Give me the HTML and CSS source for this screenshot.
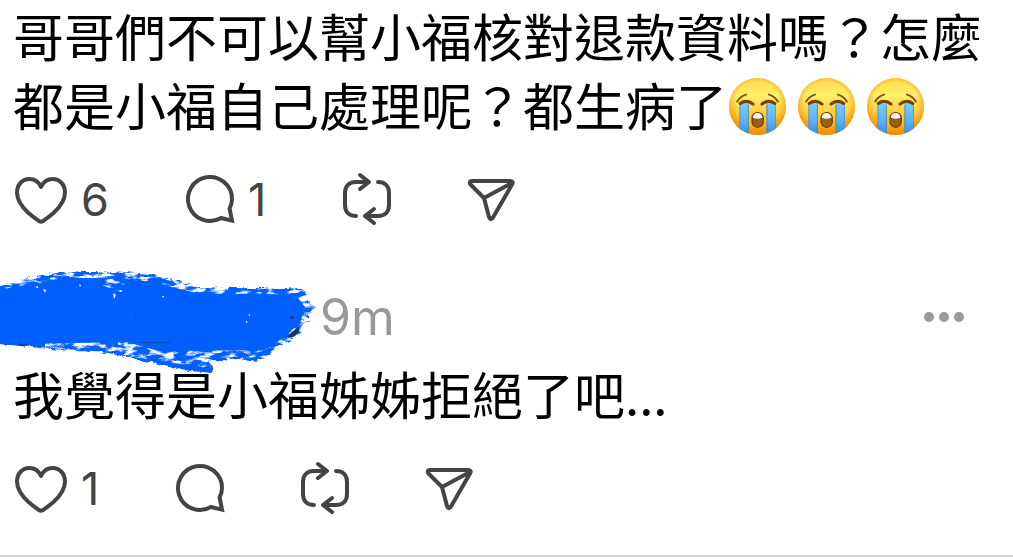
FILE: index.html
```html
<!DOCTYPE html>
<html lang="zh-Hant">
<head>
  <meta charset="UTF-8">
  <meta name="viewport" content="width=device-width, initial-scale=1">
  <title>Thread</title>
  <link rel="stylesheet" href="styles.css">
</head>
<body>
  <!-- shared icons -->
  <svg class="sprite" aria-hidden="true">
    <defs>
      <linearGradient id="face" x1="0" y1="0" x2="0" y2="1">
        <stop offset="0" stop-color="#ffd84a"/>
        <stop offset="0.3" stop-color="#fff06a"/>
        <stop offset="0.65" stop-color="#ffcb35"/>
        <stop offset="1" stop-color="#f99a12"/>
      </linearGradient>
      <radialGradient id="rim" cx="0.5" cy="0.45" r="0.55">
        <stop offset="0.7" stop-color="#f58a00" stop-opacity="0"/>
        <stop offset="1" stop-color="#f08000" stop-opacity="0.75"/>
      </radialGradient>
      <linearGradient id="tear" x1="0" y1="0" x2="0" y2="1">
        <stop offset="0" stop-color="#7cc8fb"/>
        <stop offset="0.55" stop-color="#5ab2f5"/>
        <stop offset="1" stop-color="#2b85e4"/>
      </linearGradient>
      <clipPath id="round"><circle cx="111" cy="108" r="84"/></clipPath>
    </defs>
    <symbol id="heart" viewBox="0 0 52 52">
      <path d="M26 13C23.5 7.500 19.500 5 14.500 5 7.500 5 2 10.500 2 18.500c0 9 5.500 15 11.500 20.500 4 3.500 7 5.500 10.500 8q2 1.300 4 0c3.500-2.500 6.500-4.500 10.500-8C44.500 33.500 50 27.500 50 18.500 50 10.500 44.500 5 37.500 5 32.500 5 28.500 7.500 26 13z"/>
    </symbol>
    <symbol id="bubble" viewBox="0 0 48 52">
      <path d="M35 44A22 22 0 1 1 46 25Q46 30 43.600 34.500L46 46.600z"/>
    </symbol>
    <symbol id="repost" viewBox="0 0 48 52">
      <path d="M13 42C6 42 2 38 2 31V19C2 12 6 8 13 8H26M17 1l9 7-9 7M35 8c7 0 11 4 11 11v12c0 7-4 11-11 11H22M31 35l-9 7 9 7"/>
    </symbol>
    <symbol id="send" viewBox="0 0 48 52">
      <path d="M4 7H42Q46 7 44 10.500L25 43.500Q22.500 47 21 43L16 24 2.500 10.500Q.500 7 4 7zM16 24L44 9"/>
    </symbol>
    <symbol id="crying" viewBox="27 24 168 168">
      <circle cx="111" cy="108" r="84" fill="url(#face)"/>
      <circle cx="111" cy="108" r="84" fill="url(#rim)"/>
      <g clip-path="url(#round)">
        <path d="M58 99H86V196H58zM137 99H165V196H137z" fill="url(#tear)"/>
        <path d="M59 99V196M164 99V196" stroke="#3b8bd8" stroke-width="2"/>
        <path d="M84 103V196M139 103V196" stroke="#6c8c76" stroke-width="3"/>
      </g>
      <path d="M51 93Q60 78 77 73M171 93Q162 78 145 73" fill="none" stroke="#875008" stroke-width="6" stroke-linecap="round"/>
      <path d="M60 99Q79 86 98 101M124 101Q143 86 162 99" fill="none" stroke="#764006" stroke-width="9" stroke-linecap="round"/>
      <rect x="93" y="124" width="37" height="47" rx="18" fill="#6e3e04"/>
      <path d="M97 146Q111 139 126 146V153Q124 168 111 168T97 153z" fill="#97630c"/>
      <path d="M97 142Q98 127 111 127T126 142Q111 146 97 142z" fill="#f6f5f4"/>
    </symbol>
  </svg>

  <main class="thread">
    <article class="post">
      <p class="text">哥哥們不可以幫小福核對退款資料嗎？怎麼都是小福自己處理呢？都生病了<svg class="emoji" role="img" aria-label="😭"><use href="#crying"/></svg><svg class="emoji" role="img" aria-label="😭"><use href="#crying"/></svg><svg class="emoji" role="img" aria-label="😭"><use href="#crying"/></svg></p>
      <div class="actions">
        <button type="button" aria-label="Like"><svg class="icon icon-heart"><use href="#heart"/></svg><span>6</span></button>
        <button type="button" aria-label="Reply"><svg class="icon icon-bubble"><use href="#bubble"/></svg><span>1</span></button>
        <button type="button" aria-label="Repost"><svg class="icon"><use href="#repost"/></svg></button>
        <button type="button" aria-label="Share"><svg class="icon"><use href="#send"/></svg></button>
      </div>
    </article>

    <article class="post reply">
      <header class="post-header">
        <div class="author">
          <svg class="scribble" viewBox="0 0 320 110" aria-hidden="true">
            <defs>
              <filter id="rough" x="-5%" y="-10%" width="110%" height="120%">
                <feTurbulence type="fractalNoise" baseFrequency="0.12 0.25" numOctaves="3" seed="4" result="n"/>
                <feDisplacementMap in="SourceGraphic" in2="n" scale="6" xChannelSelector="R" yChannelSelector="G"/>
              </filter>
              <filter id="dry" x="-5%" y="-10%" width="110%" height="120%">
                <feTurbulence type="fractalNoise" baseFrequency="0.08 0.22" numOctaves="4" seed="9" result="n"/>
                <feColorMatrix in="n" type="matrix" values="0 0 0 0 1  0 0 0 0 1  0 0 0 0 1  5 0 0 0 -2.300" result="specks"/>
                <feComposite in="specks" in2="SourceGraphic" operator="in"/>
              </filter>
            </defs>
            <path filter="url(#rough)" fill="#0061fe" d="M-10 19L8 15 22 9 42 6 60 2 112 2 150 5 177 11 198 17 235 18 298 18 306 23 308 31 315 37 309 43 309 51 301 56 300 64 290 71 277 76 270 85 256 91 240 88 210 91 213 103 190 101 160 94 130 88 108 83 60 80 20 76-10 73z"/>
            <g filter="url(#dry)" fill="none" stroke="#fff">
              <path stroke-width="7" d="M5 15L40 9 65 4 110 5 150 8 178 15 200 20 298 21"/>
              <path stroke-width="9" d="M104 11L123 18"/>
              <path stroke-width="9" d="M45 78L100 77 150 85 212 94"/>
              <path stroke-width="7" d="M118 73L160 85 205 84 265 84"/>
              <path stroke-width="9" d="M298 20L310 37 304 55 287 71 262 86"/>
            </g>
            <g fill="#fff">
              <path d="M35 17l3-1 0 2zM43 19l3 1-1 3zM79 14l2 1-1 2zM113 23l3 2-2 4zM162 26l2 0-1 2zM248 45l2-1 0 2zM246 51l2 1-2 1z"/>
            </g>
            <path fill="#173768" d="M19 73q5 3 8 0v2q-5 2-8 0zM290 46l3 0 1 2-3 1z"/>
            <path fill="#173768" opacity="0.5" d="M139 72h31v1h-31zM135 45h1v4h-1z"/>
            <path fill="#193867" d="M298 57q3 3-1 7-4 4-10 3l5-5z"/>
          </svg>
        </div>
        <time class="age">9m</time>
        <button type="button" class="more" aria-label="More">
          <svg viewBox="0 0 40 10"><circle cx="5" cy="5" r="5"/><circle cx="20" cy="5" r="5"/><circle cx="35" cy="5" r="5"/></svg>
        </button>
      </header>
      <p class="text">我覺得是小福姊姊拒絕了吧...</p>
      <div class="actions">
        <button type="button" aria-label="Like"><svg class="icon icon-heart"><use href="#heart"/></svg><span>1</span></button>
        <button type="button" aria-label="Reply"><svg class="icon icon-bubble"><use href="#bubble"/></svg></button>
        <button type="button" aria-label="Repost"><svg class="icon"><use href="#repost"/></svg></button>
        <button type="button" aria-label="Share"><svg class="icon"><use href="#send"/></svg></button>
      </div>
    </article>
  </main>
</body>
</html>
```
FILE: styles.css
```css
* {
  box-sizing: border-box;
}
body {
  margin: 0;
  background: #fff;
  color: #000;
  font-family: Inter, "Noto Sans CJK TC", sans-serif;
}
button {
  display: flex;
  align-items: center;
  gap: 14px;
  padding: 0;
  border: none;
  background: none;
  color: #444;
  font: inherit;
  font-size: 45px;
  line-height: 52px;
  cursor: pointer;
}
symbol {
  overflow: visible;
}
.sprite {
  position: absolute;
  width: 0;
  height: 0;
}
.post {
  padding: 1px 13px 0 13px;
}
.reply {
  padding-top: 61px;
  padding-bottom: 40px;
  border-bottom: 2px solid #d5d5d5;
}
.text {
  margin: 0;
  font-family: "Noto Sans CJK TC", sans-serif;
  font-size: 51px;
  line-height: 69px;
}
.emoji {
  width: 57px;
  height: 57px;
  margin: 0 10px 0 2px;
  vertical-align: -9px;
}
.actions {
  display: flex;
  gap: 77px;
  margin-top: 35px;
  padding-left: 2px;
}
.icon {
  width: 48px;
  height: 52px;
  overflow: visible;
  fill: none;
  stroke: #444;
  stroke-width: 4;
  stroke-linecap: round;
  stroke-linejoin: round;
}
.icon-heart {
  width: 52px;
}
.icon-bubble {
  stroke-linejoin: miter;
}
.post-header {
  display: flex;
  align-items: center;
  height: 60px;
  margin-bottom: 12px;
}
.author {
  position: relative;
  width: 307px;
  height: 60px;
}
/* brush stroke runs over the name and out to the page edge */
.scribble {
  position: absolute;
  left: -13px;
  top: -17px;
  width: 320px;
  height: 110px;
}
.age {
  color: #999;
  font-size: 50px;
  line-height: 60px;
}
.more {
  margin-left: auto;
  margin-right: 36px;
}
.more svg {
  width: 40px;
  height: 10px;
  fill: #999;
}
```
